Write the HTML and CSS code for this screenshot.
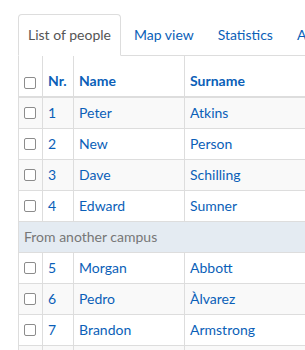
FILE: index.html
```html
<!DOCTYPE html>
<html>
<head>
  <title>People</title>
  <link rel="stylesheet" href="styles.css">
</head>
<body>
  <div class="page">
    <ul class="nav-tabs">
      <li class="active"><a href="#">List of people</a></li>
      <li><a href="#">Map view</a></li>
      <li><a href="#">Statistics</a></li>
      <li><a href="#">About</a></li>
    </ul>

    <table class="people">
      <colgroup>
        <col class="c-check">
        <col class="c-nr">
        <col class="c-name">
        <col class="c-surname">
      </colgroup>
      <thead>
        <tr>
          <th><input type="checkbox" class="check"></th>
          <th><a href="#">Nr.</a></th>
          <th><a href="#">Name</a></th>
          <th><a href="#">Surname</a></th>
        </tr>
      </thead>
      <tbody>
        <tr>
          <td><input type="checkbox" class="check"></td>
          <td><a href="#">1</a></td>
          <td><a href="#">Peter</a></td>
          <td><a href="#">Atkins</a></td>
        </tr>
        <tr>
          <td><input type="checkbox" class="check"></td>
          <td><a href="#">2</a></td>
          <td><a href="#">New</a></td>
          <td><a href="#">Person</a></td>
        </tr>
        <tr>
          <td><input type="checkbox" class="check"></td>
          <td><a href="#">3</a></td>
          <td><a href="#">Dave</a></td>
          <td><a href="#">Schilling</a></td>
        </tr>
        <tr>
          <td><input type="checkbox" class="check"></td>
          <td><a href="#">4</a></td>
          <td><a href="#">Edward</a></td>
          <td><a href="#">Sumner</a></td>
        </tr>
        <tr class="group">
          <td colspan="4">From another campus</td>
        </tr>
        <tr>
          <td><input type="checkbox" class="check"></td>
          <td><a href="#">5</a></td>
          <td><a href="#">Morgan</a></td>
          <td><a href="#">Abbott</a></td>
        </tr>
        <tr>
          <td><input type="checkbox" class="check"></td>
          <td><a href="#">6</a></td>
          <td><a href="#">Pedro</a></td>
          <td><a href="#">Àlvarez</a></td>
        </tr>
        <tr>
          <td><input type="checkbox" class="check"></td>
          <td><a href="#">7</a></td>
          <td><a href="#">Brandon</a></td>
          <td><a href="#">Armstrong</a></td>
        </tr>
        <tr class="last">
          <td></td>
          <td></td>
          <td></td>
          <td></td>
        </tr>
      </tbody>
    </table>
  </div>
</body>
</html>
```

FILE: styles.css
```css
html, body {
  margin: 0;
  padding: 0;
  overflow: hidden;
}
body {
  font-family: Lato, "Liberation Sans", sans-serif;
  font-size: 14px;
  line-height: 20px;
  color: #333;
  background: #fff;
}
a {
  color: #0b5fb8;
  text-decoration: none;
}
.page {
  padding: 14px 0 0 18px;
  width: 700px;
}

/* tabs */
.nav-tabs {
  list-style: none;
  margin: 0;
  padding: 0;
  display: flex;
  border-bottom: 1px solid #ddd;
}
.nav-tabs li {
  margin-right: 2px;
  margin-bottom: -1px;
}
.nav-tabs li a {
  display: block;
  padding: 10px 10px;
  border: 1px solid transparent;
  border-radius: 4px 4px 0 0;
}
.nav-tabs li.active a {
  padding: 10px 9px;
  color: #555;
  background: #fff;
  border-color: #ddd #ddd transparent #ddd;
}

/* table */
.people {
  width: 600px;
  border-collapse: collapse;
  table-layout: fixed;
}
.c-check { width: 24px; }
.c-nr { width: 31px; }
.c-name { width: 111px; }
.people th,
.people td {
  padding: 5px;
  text-align: left;
  border-left: 1px solid #ddd;
  border-top: 1px solid #ddd;
  white-space: nowrap;
}
.people th {
  height: 30px;
  vertical-align: bottom;
  font-weight: bold;
  border-top: none;
  border-bottom: 2px solid #ddd;
}
.people th .check {
  margin-bottom: 2px;
}
.people td {
  vertical-align: middle;
}
.people tbody tr:nth-child(odd) {
  background: #f9f9f9;
}
.people tbody tr.group {
  background: #e4ebf2;
}
.people tr.group td {
  color: #777;
}
.people tr.last td {
  height: 20px;
}
.check {
  -webkit-appearance: none;
  appearance: none;
  display: block;
  width: 12px;
  height: 12px;
  margin: 0;
  border: 1px solid #8c8c8c;
  border-radius: 2px;
  background: #fff;
}
```
